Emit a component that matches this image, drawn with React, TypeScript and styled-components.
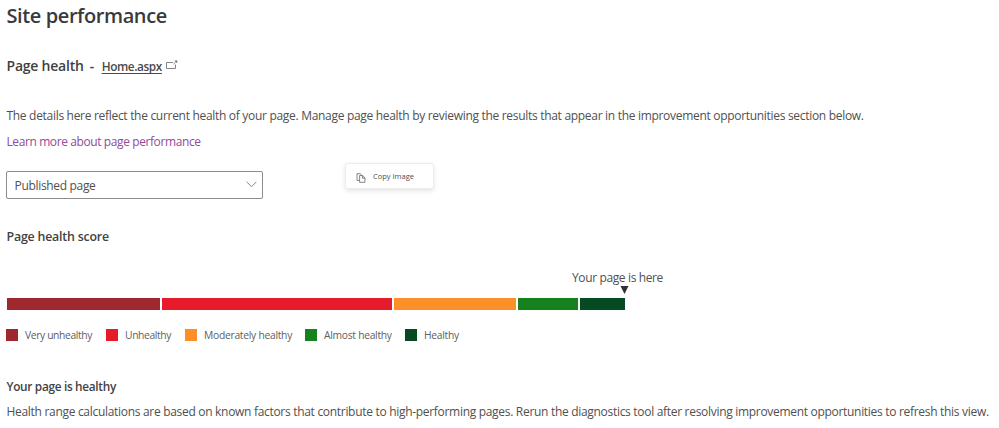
import React from 'react';
import styled, { createGlobalStyle } from 'styled-components';

const GlobalStyle = createGlobalStyle`
  * { box-sizing: border-box; }
  body {
    margin: 0;
    background: #fff;
    color: #505050;
    font-family: 'Open Sans', 'Noto Sans', sans-serif;
    overflow: hidden;
  }
`;

const Page = styled.main`
  position: relative;
  width: 999px;
  height: 428px;
  padding: 2px 0 0 6.5px;
  display: flex;
  flex-direction: column;
  align-items: flex-start;
  white-space: nowrap;
`;

const Title = styled.h1`
  margin: 0;
  font-size: 20px;
  font-weight: 600;
  letter-spacing: -0.4px;
  line-height: 28px;
  color: #3a3a3a;
`;

const HealthRow = styled.div`
  display: flex;
  align-items: baseline;
  height: 20px;
  margin-top: 26px;
  line-height: 20px;
  color: #3f3f3f;
`;

const HealthHeading = styled.h2`
  margin: 0;
  font-size: 14px;
  font-weight: 600;
  letter-spacing: -0.22px;
  line-height: 20px;
`;

const Dash = styled.span`
  width: 18px;
  padding-left: 6px;
  font-size: 13.5px;
  font-weight: 600;
`;

const PageLink = styled.a`
  font-size: 11.8px;
  font-weight: 600;
  letter-spacing: -0.4px;
  color: #4a4a4a;
  text-decoration: underline;
  text-decoration-thickness: 1px;
  text-underline-offset: 2px;
  text-decoration-skip-ink: none;
`;

const OpenIcon = styled.svg`
  align-self: flex-start;
  width: 13px;
  height: 10px;
  margin: 4px 0 0 3.5px;
`;

const Text = styled.p<{ $top: number }>`
  margin: ${(p) => p.$top}px 0 0;
  font-size: 12px;
  letter-spacing: -0.302px;
  line-height: 20px;
`;

const LearnMore = styled.a`
  margin-top: 6px;
  font-size: 12px;
  letter-spacing: -0.4px;
  line-height: 20px;
  color: #914a9c;
`;

const Select = styled.div`
  display: flex;
  align-items: center;
  justify-content: space-between;
  width: 257px;
  height: 28px;
  margin: 19px 0 0 -0.5px;
  padding: 1px 5px 0 7.5px;
  border: 1px solid #8c8c8c;
  border-radius: 2px;
  font-size: 12px;
  letter-spacing: -0.32px;
  line-height: 20px;
`;

const Chevron = styled.svg`
  width: 11px;
  height: 7px;
  margin-top: -3px;
`;

const SectionHeading = styled.h3<{ $top: number; $size: number; $spacing: number }>`
  margin: ${(p) => p.$top}px 0 0;
  font-size: ${(p) => p.$size}px;
  font-weight: 600;
  letter-spacing: ${(p) => p.$spacing}px;
  line-height: 20px;
  color: #424242;
`;

const Marker = styled.div`
  display: flex;
  flex-direction: column;
  align-items: center;
  width: 92px;
  margin: 21px 0 0 565px;
  font-size: 12px;
  letter-spacing: -0.37px;
  line-height: 20px;
`;

const Pointer = styled.svg`
  width: 9px;
  height: 8px;
  margin: -2px 0 0 13px;
`;

const ScoreBar = styled.div`
  display: grid;
  grid-template-columns: 153fr 230fr 122fr 60fr 45fr;
  gap: 2px;
  width: 618px;
  height: 12px;
  margin: 4px 0 0 0.5px;
`;

const Segment = styled.div<{ $color: string }>`
  background: ${(p) => p.$color};
`;

const Legend = styled.ul`
  display: grid;
  grid-template-columns: 100px 79px 120px 100px 60px;
  margin: 15px 0 0 -0.5px;
  padding: 0;
  list-style: none;
`;

const LegendItem = styled.li<{ $spacing: number }>`
  display: flex;
  align-items: center;
  gap: 7px;
  height: 20px;
  font-size: 10.3px;
  letter-spacing: ${(p) => p.$spacing}px;
  color: #606060;
`;

const Swatch = styled.span<{ $color: string }>`
  width: 12px;
  height: 12px;
  background: ${(p) => p.$color};
`;

const ContextMenu = styled.div`
  position: absolute;
  left: 345px;
  top: 163px;
  display: flex;
  align-items: center;
  width: 89px;
  height: 26px;
  padding-left: 10px;
  border: 1px solid #ededed;
  border-radius: 3px;
  background: #fff;
  box-shadow: 0 2px 5px rgba(0, 0, 0, 0.11);
  font-size: 7.5px;
  line-height: 12px;
`;

const CopyIcon = styled.svg`
  width: 10px;
  height: 10px;
  margin: 3px 7px 0 0;
`;

const ranges = [
  { label: 'Very unhealthy', color: '#9f282f', spacing: -0.36 },
  { label: 'Unhealthy', color: '#e51a2b', spacing: -0.37 },
  { label: 'Moderately healthy', color: '#fd8f2a', spacing: -0.27 },
  { label: 'Almost healthy', color: '#17801f', spacing: -0.28 },
  { label: 'Healthy', color: '#054a22', spacing: -0.27 },
];

export default function App() {
  return (
    <>
      <GlobalStyle />
      <Page>
        <Title>Site performance</Title>
        <HealthRow>
          <HealthHeading>Page health</HealthHeading>
          <Dash>-</Dash>
          <PageLink>Home.aspx</PageLink>
          <OpenIcon viewBox="0 0 13 10" fill="none" stroke="#777">
            <path d="M8 2.5H1.5v6h9V4.5M8.4 4.2l2.4-2.2" strokeWidth="0.9" />
            <path d="M9.4 0.6h2.8v2.6z" fill="#666" stroke="none" />
          </OpenIcon>
        </HealthRow>
        <Text $top={30}>
          The details here reflect the current health of your page. Manage page health by
          reviewing the results that appear in the improvement opportunities section below.
        </Text>
        <LearnMore>Learn more about page performance</LearnMore>
        <Select>
          <span>Published page</span>
          <Chevron viewBox="0 0 11 7" fill="none" stroke="#777">
            <path d="M0.7 0.9l4.8 4.8 4.8-4.8" strokeWidth="0.9" />
          </Chevron>
        </Select>
        <SectionHeading $top={28} $size={12.4} $spacing={-0.21}>
          Page health score
        </SectionHeading>
        <Marker>
          <span>Your page is here</span>
          <Pointer viewBox="0 0 9 8">
            <path d="M0.5 0h8L4.5 8z" fill="#303030" />
          </Pointer>
        </Marker>
        <ScoreBar>
          {ranges.map((r) => (
            <Segment key={r.label} $color={r.color} />
          ))}
        </ScoreBar>
        <Legend>
          {ranges.map((r) => (
            <LegendItem key={r.label} $spacing={r.spacing}>
              <Swatch $color={r.color} />
              {r.label}
            </LegendItem>
          ))}
        </Legend>
        <SectionHeading $top={31} $size={11.8} $spacing={-0.3}>
          Your page is healthy
        </SectionHeading>
        <Text $top={6}>
          Health range calculations are based on known factors that contribute to
          high-performing pages. Rerun the diagnostics tool after resolving improvement
          opportunities to refresh this view.
        </Text>
        <ContextMenu>
          <CopyIcon viewBox="0 0 10 10" fill="none" stroke="#666" strokeWidth="0.8">
            <path d="M3.4 7.4H1V.7h3.2l1.5 1.4" />
            <path d="M3.6 2.5h3l2.4 2.4v4.4H3.6zM6.4 2.6v2.6H9" />
          </CopyIcon>
          Copy Image
        </ContextMenu>
      </Page>
    </>
  );
}
